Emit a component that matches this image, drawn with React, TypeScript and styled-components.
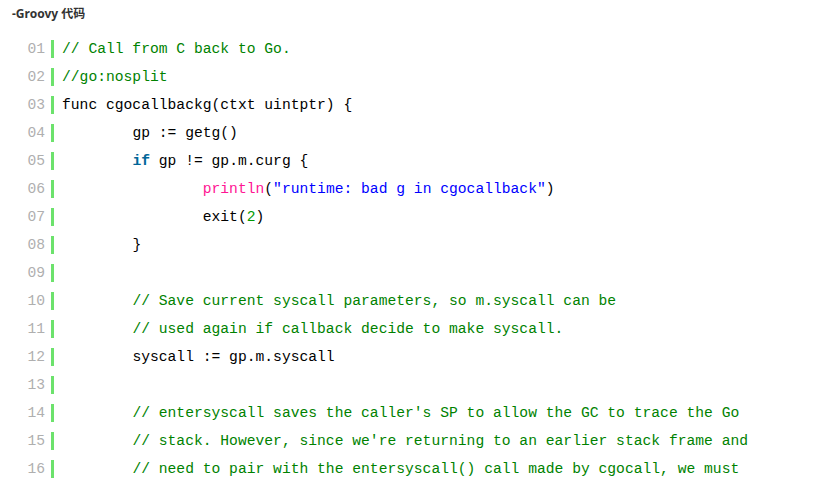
import React from "react";
import styled, { createGlobalStyle } from "styled-components";

const Global = createGlobalStyle`
  html, body { margin: 0; padding: 0; background: #fff; }
`;

const Page = styled.div`
  padding: 6px 0 0 12px;
`;

const Title = styled.div`
  font-family: "Noto Sans", "Noto Sans CJK SC", sans-serif;
  font-weight: bold;
  font-size: 12px;
  line-height: 16px;
  color: #333;
  height: 29px;
`;

const Code = styled.div`
  display: flex;
  flex-direction: column;
  padding-left: 15px;
  font-family: "Liberation Mono", monospace;
  font-size: 14.67px;
`;

const Row = styled.div`
  display: flex;
  align-items: center;
  height: 28px;
`;

const Num = styled.span`
  display: block;
  width: 18px;
  padding-right: 6px;
  text-align: right;
  color: #afafaf;
  line-height: 18px;
  height: 18px;
  border-right: 3px solid #6ce26c;
  white-space: pre;
`;

const Line = styled.span`
  padding-left: 8px;
  white-space: pre;
  tab-size: 8;
  color: #000;
  line-height: 18px;
`;

type Kind = "c" | "k" | "f" | "s" | "v" | "p";
const Tok = styled.span<{ $k: Kind }>`
  color: ${(p) =>
    p.$k === "c" ? "#008200" : p.$k === "k" ? "#006699" : p.$k === "f" ? "#ff1493" : p.$k === "s" ? "#0000ff" : p.$k === "v" ? "#009900" : "#000"};
  font-weight: ${(p) => (p.$k === "k" ? "bold" : "normal")};
`;

type Part = [Kind, string];
const lines: Part[][] = [
  [["c", "// Call from C back to Go."]],
  [["c", "//go:nosplit"]],
  [["p", "func cgocallbackg(ctxt uintptr) {"]],
  [["p", "\tgp := getg()"]],
  [["p", "\t"], ["k", "if"], ["p", " gp != gp.m.curg {"]],
  [["p", "\t\t"], ["f", "println"], ["p", "("], ["s", "\"runtime: bad g in cgocallback\""], ["p", ")"]],
  [["p", "\t\texit("], ["v", "2"], ["p", ")"]],
  [["p", "\t}"]],
  [],
  [["p", "\t"], ["c", "// Save current syscall parameters, so m.syscall can be"]],
  [["p", "\t"], ["c", "// used again if callback decide to make syscall."]],
  [["p", "\tsyscall := gp.m.syscall"]],
  [],
  [["p", "\t"], ["c", "// entersyscall saves the caller's SP to allow the GC to trace the Go"]],
  [["p", "\t"], ["c", "// stack. However, since we're returning to an earlier stack frame and"]],
  [["p", "\t"], ["c", "// need to pair with the entersyscall() call made by cgocall, we must"]],
];

export default function App() {
  return (
    <Page>
      <Global />
      <Title>-Groovy 代码</Title>
      <Code>
        {lines.map((parts, i) => (
          <Row key={i}>
            <Num>{String(i + 1).padStart(2, "0")}</Num>
            <Line>
              {parts.map(([k, t], j) => (
                <Tok key={j} $k={k}>
                  {t}
                </Tok>
              ))}
            </Line>
          </Row>
        ))}
      </Code>
    </Page>
  );
}
